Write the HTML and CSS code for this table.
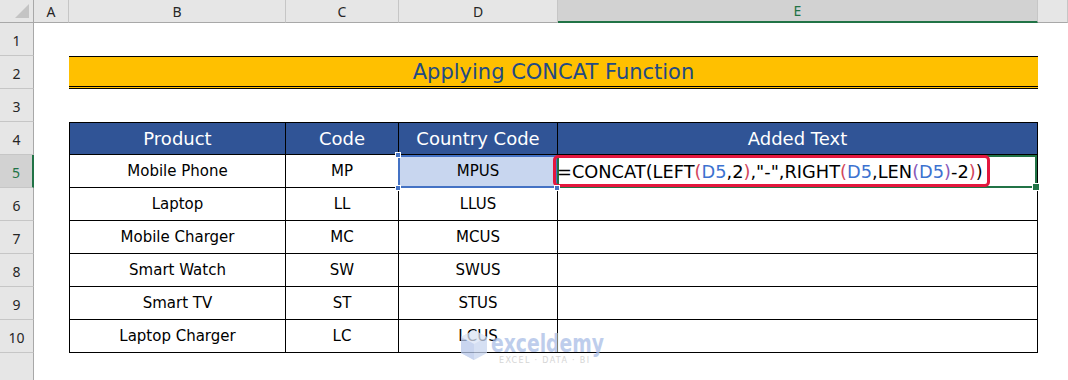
FILE: index.html
```html
<!DOCTYPE html>
<html lang="en">
<head>
    <meta charset="UTF-8">
    <meta name="viewport" content="width=device-width, initial-scale=1.0">
    <title>Applying CONCAT Function</title>

    <link rel="stylesheet" href="styles.css">
</head>
<body>
    <div class="sheet">
        <!-- column headers -->
        <div class="ch corner"></div>
        <div class="ch">A</div>
        <div class="ch">B</div>
        <div class="ch">C</div>
        <div class="ch">D</div>
        <div class="ch active">E</div>
        <div class="ch"></div>

        <!-- row 1 -->
        <div class="rh">1</div>
        <div class="c"></div><div class="c"></div><div class="c"></div><div class="c"></div><div class="c"></div><div class="c"></div>

        <!-- row 2 : title -->
        <div class="rh">2</div>
        <div class="c"></div>
        <div class="c title">Applying CONCAT Function</div>
        <div class="c"></div>

        <!-- row 3 -->
        <div class="rh">3</div>
        <div class="c"></div><div class="c"></div><div class="c"></div><div class="c"></div><div class="c"></div><div class="c"></div>

        <!-- row 4 : table header -->
        <div class="rh">4</div>
        <div class="c"></div>
        <div class="c t first th">Product</div>
        <div class="c t th">Code</div>
        <div class="c t th">Country Code</div>
        <div class="c t th">Added Text</div>
        <div class="c"></div>

        <!-- row 5 -->
        <div class="rh active">5</div>
        <div class="c"></div>
        <div class="c t first">Mobile Phone</div>
        <div class="c t">MP</div>
        <div class="c t sel">MPUS<i class="hd tl"></i><i class="hd bl"></i><i class="hd br"></i></div>
        <div class="c t cur">
            <span class="formula">=CONCAT(LEFT<span class="p1">(</span><span class="ref">D5</span>,2<span class="p1">)</span>,"-",RIGHT<span class="p1">(</span><span class="ref">D5</span>,LEN<span class="p2">(</span><span class="ref">D5</span><span class="p2">)</span>-2<span class="p1">)</span>)</span>
        </div>
        <div class="c"></div>

        <!-- row 6 -->
        <div class="rh">6</div>
        <div class="c"></div>
        <div class="c t first">Laptop</div>
        <div class="c t">LL</div>
        <div class="c t">LLUS</div>
        <div class="c t"></div>
        <div class="c"></div>

        <!-- row 7 -->
        <div class="rh">7</div>
        <div class="c"></div>
        <div class="c t first">Mobile Charger</div>
        <div class="c t">MC</div>
        <div class="c t">MCUS</div>
        <div class="c t"></div>
        <div class="c"></div>

        <!-- row 8 -->
        <div class="rh">8</div>
        <div class="c"></div>
        <div class="c t first">Smart Watch</div>
        <div class="c t">SW</div>
        <div class="c t">SWUS</div>
        <div class="c t"></div>
        <div class="c"></div>

        <!-- row 9 -->
        <div class="rh">9</div>
        <div class="c"></div>
        <div class="c t first">Smart TV</div>
        <div class="c t">ST</div>
        <div class="c t">STUS</div>
        <div class="c t"></div>
        <div class="c"></div>

        <!-- row 10 -->
        <div class="rh">10</div>
        <div class="c"></div>
        <div class="c t first">Laptop Charger</div>
        <div class="c t">LC</div>
        <div class="c t">LCUS</div>
        <div class="c t"></div>
        <div class="c"></div>

        <!-- row 11, cut off -->
        <div class="rh last"></div>

        <!-- site watermark -->
        <svg class="watermark" width="170" height="46" viewBox="0 0 170 46">
            <polygon points="16,4 29,11 29,27 16,34 3,27 3,11" fill="#c9d6f0"/>
            <polygon points="16,4 29,11 16,18 3,11" fill="#dce5f6"/>
            <polygon points="16,18 16,34 3,27 3,11" fill="#b7c8ea"/>
            <text x="33" y="26" class="wm-name" textLength="113" lengthAdjust="spacingAndGlyphs">exceldemy</text>
            <text x="41" y="37" class="wm-sub" textLength="90" lengthAdjust="spacing">EXCEL · DATA · BI</text>
        </svg>
    </div>
</body>
</html>
```

FILE: styles.css
```css
* {
    box-sizing: border-box;
}

body {
    margin: 0;
    background: #fff;
}

.sheet {
    position: relative;
    display: grid;
    grid-template-columns: 34px 35px 217px 113px 159px 480px 1fr;
    grid-template-rows: 23px repeat(10, 33px) 1fr;
    width: 1068px;
    height: 380px;
    overflow: hidden;
    font-family: "Comic Sans MS", "DejaVu Sans", sans-serif;
}

/* column letters */
.ch {
    display: flex;
    align-items: center;
    justify-content: center;
    background: #e6e6e6;
    border-right: 1px solid #c6c6c6;
    border-bottom: 1px solid #a8a8a8;
    font-family: "Noto Sans", sans-serif;
    font-size: 14px;
    color: #262626;
}

.ch.active {
    background: #d2d2d2;
    color: #217346;
    border-bottom: 2px solid #217346;
}

.corner {
    position: relative;
    border-right-color: #a8a8a8;
}

.corner::after {
    content: "";
    position: absolute;
    right: 4px;
    bottom: 4px;
    width: 14px;
    height: 14px;
    background: #c4c4c4;
    clip-path: polygon(100% 0, 100% 100%, 0 100%);
}

/* row numbers */
.rh {
    display: flex;
    align-items: center;
    justify-content: center;
    background: #e6e6e6;
    border-right: 1px solid #a8a8a8;
    border-bottom: 1px solid #c6c6c6;
    font-family: "Noto Sans", sans-serif;
    font-size: 14px;
    color: #262626;
    padding-top: 2px;
}

.rh.active {
    background: #d2d2d2;
    color: #217346;
    border-right: 2px solid #217346;
}

.rh.last {
    border-bottom: none;
}

/* worksheet cells */
.c {
    display: flex;
    align-items: center;
    justify-content: center;
    font-size: 15px;
    color: #000;
    white-space: nowrap;
}

.title {
    grid-column: span 4;
    background: #ffc000;
    border-top: 1px solid #000;
    border-bottom: 3px double #000;
    color: #234a84;
    font-size: 21px;
}

.t {
    border-right: 1px solid #000;
    border-bottom: 1px solid #000;
}

.t.first {
    border-left: 1px solid #000;
}

.th {
    background: #305496;
    color: #fff;
    font-size: 18px;
    border-top: 1px solid #000;
}

/* selected range D5 */
.sel {
    position: relative;
    background: #c8d6ef;
}

.sel::after {
    content: "";
    position: absolute;
    left: -1px;
    top: 0;
    right: 0;
    bottom: -1px;
    border: 2px solid #4472c4;
}

.hd {
    position: absolute;
    width: 6px;
    height: 6px;
    background: #4472c4;
    border: 1px solid #fff;
    z-index: 2;
}

.hd.tl { left: -4px; top: -3px; }
.hd.bl { left: -4px; bottom: -4px; }
.hd.br { right: -3px; bottom: -4px; }

/* active cell E5 */
.cur {
    position: relative;
    justify-content: flex-start;
}

.cur::after {
    content: "";
    position: absolute;
    left: -1px;
    top: 0;
    right: 0;
    bottom: -1px;
    border: 2px solid #217346;
}

.cur::before {
    content: "";
    position: absolute;
    right: -3px;
    bottom: -4px;
    width: 6px;
    height: 6px;
    background: #217346;
    border: 1px solid #fff;
    z-index: 2;
}

.formula {
    position: relative;
    z-index: 1;
    display: flex;
    align-items: center;
    height: 32px;
    margin-left: -5px;
    padding: 0 4px 0 1px;
    border: 3px solid #e3173e;
    border-radius: 5px;
    font-size: 17.8px;
}

.ref { color: #3c72d0; }
.p1 { color: #d2465c; }
.p2 { color: #8a58b8; }

.watermark {
    position: absolute;
    left: 458px;
    top: 326px;
    opacity: 0.75;
}

.wm-name {
    font-family: "DejaVu Sans", sans-serif;
    font-weight: bold;
    font-size: 24px;
    fill: #a9bde6;
}

.wm-sub {
    font-family: "DejaVu Sans", sans-serif;
    font-size: 8px;
    fill: #c8c8c8;
}
```
